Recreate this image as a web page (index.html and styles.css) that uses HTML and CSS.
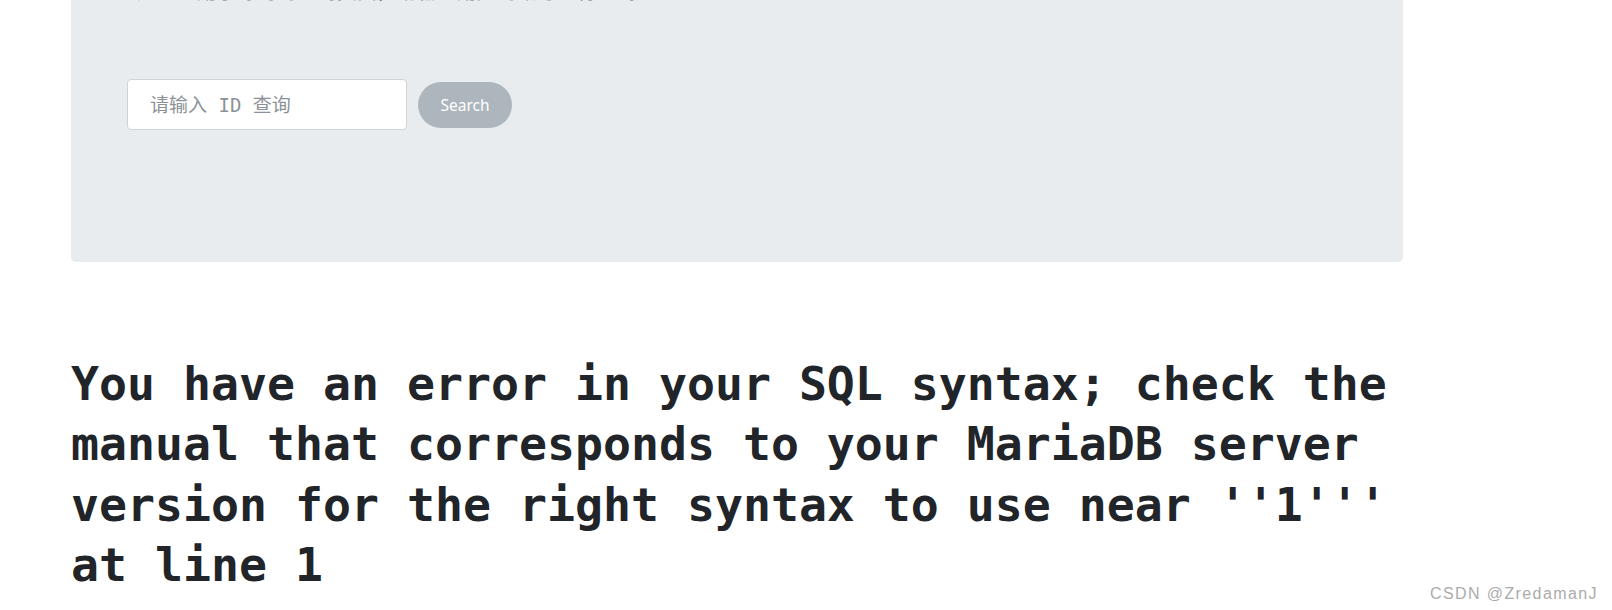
FILE: index.html
```html
<!DOCTYPE html>
<html lang="zh-CN">
<head>
<meta charset="utf-8">
<title>SQL Error</title>
<link rel="stylesheet" href="styles.css">
</head>
<body>
<div class="page">
  <div class="jumbo">
    <p class="lead">这是一个用于练习的查询页面，请输入用户的编号进行查询。</p>
    <form class="search-form">
      <input class="search-input" type="text" placeholder="请输入 ID 查询">
      <button class="search-btn" type="button">Search</button>
    </form>
  </div>
  <h1 class="error">You have an error in your SQL syntax; check the manual that corresponds to your MariaDB server version for the right syntax to use near ''1''' at line 1</h1>
</div>
<div class="watermark">CSDN @ZredamanJ</div>
</body>
</html>
```

FILE: styles.css
```css
html, body {
  margin: 0;
  padding: 0;
  background: #ffffff;
  overflow: hidden;
}

body {
  width: 1612px;
  height: 610px;
  position: relative;
  font-family: "Noto Sans", "Noto Sans CJK SC", sans-serif;
}

.page {
  display: flex;
  flex-direction: column;
  padding-left: 71px;
}

.jumbo {
  width: 1332px;
  box-sizing: border-box;
  margin-top: -24px;
  padding: 0 56px 132px 46px;
  background: #e9ecef;
  border-radius: 5px;
}

.lead {
  margin: 0 0 73px 0;
  font-size: 20px;
  line-height: 30px;
  color: #6c757d;
  font-family: "Noto Sans CJK SC", sans-serif;
}

.search-form {
  display: flex;
  align-items: center;
  gap: 11px;
  margin: 0 0 0 10px;
}

.search-input {
  width: 280px;
  height: 51px;
  box-sizing: border-box;
  padding: 0 22px;
  border: 1px solid #ced4da;
  border-radius: 4px;
  background: #ffffff;
  font-family: "DejaVu Sans Mono", "Noto Sans CJK SC", monospace;
  font-size: 19px;
  color: #495057;
  outline: none;
}

.search-input::placeholder {
  color: #8b9197;
  opacity: 1;
}

.search-btn {
  width: 94px;
  height: 46px;
  border: none;
  border-radius: 23px;
  background: #adb5bd;
  color: #ffffff;
  font-family: "Noto Sans", sans-serif;
  font-size: 15.5px;
  padding: 0;
}

.error {
  width: 1332px;
  margin: 92px 0 0 0;
  font-family: "DejaVu Sans Mono", monospace;
  font-size: 46.5px;
  line-height: 60.4px;
  font-weight: 700;
  color: #212529;
}

.watermark {
  position: absolute;
  left: 1430px;
  top: 585px;
  font-family: "Liberation Sans", Arial, sans-serif;
  font-size: 16px;
  letter-spacing: 1.4px;
  color: #ababab;
  text-shadow: 0 0 1px #ffffff;
}
```
